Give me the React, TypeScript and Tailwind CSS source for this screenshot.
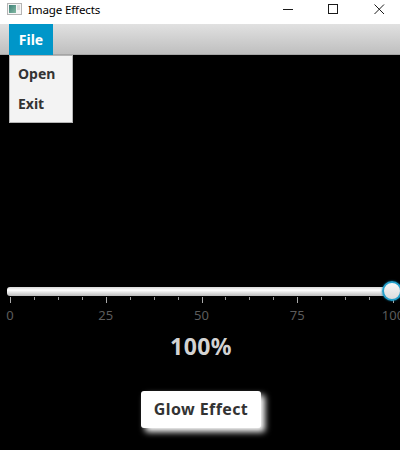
const ticks = Array.from({ length: 17 }, (_, i) => i);
const labels = [0, 25, 50, 75, 100];

function TitleBar() {
  return (
    <div className="flex h-6 items-start bg-white text-black">
      <svg className="mt-[3px] ml-[7px] shrink-0" width="15" height="12" viewBox="0 0 15 12">
        <defs>
          <linearGradient id="pane" x1="0" y1="0" x2="1" y2="1">
            <stop offset="0" stopColor="#3c8078" />
            <stop offset="1" stopColor="#83b9a2" />
          </linearGradient>
        </defs>
        <rect x=".5" y=".5" width="14" height="11" fill="#f6f6f6" stroke="#b4b4b4" />
        <rect x="2" y="2" width="7" height="8" fill="url(#pane)" />
        <rect x="10" y="2" width="3" height="5" fill="#dcdcdc" />
      </svg>
      <span className="mt-[2px] ml-[6px] flex-1 text-[11.6px] leading-4 tracking-[-0.16px] whitespace-nowrap">Image Effects</span>
      <svg className="shrink-0" width="118" height="20" viewBox="0 0 118 20" fill="none" stroke="#1a1a1a">
        <path d="M1 9.5H11" />
        <rect x="46.5" y="4.5" width="9" height="9" />
        <path d="M92.5 4.5L102 14M102 4.5L92.5 14" />
      </svg>
    </div>
  );
}

function MenuBar() {
  return (
    <div className="flex h-[31px] border-b border-[#a5a5a5] bg-linear-to-b from-[#e1e1e1] to-[#bfbfbf] pl-[9px]">
      <div className="relative h-[31px] w-11 bg-[#0096c9] text-center text-[14px] leading-8 font-bold text-white">
        File
        <div className="absolute top-[31px] left-0 flex h-[68px] w-16 flex-col border border-[#b5b5b5] bg-[#f3f3f3] pt-[5px] pl-2 text-left text-[14px] text-[#333]">
          <span className="h-[29px] leading-[26px]">Open</span>
          <span className="h-[29px] leading-[28px]">Exit</span>
        </div>
      </div>
    </div>
  );
}

function Slider() {
  return (
    <div className="flex flex-col">
      <div className="relative ml-[7px] h-[9px] rounded-l-[3px] bg-linear-to-b from-[#d8d8d8] via-white via-35% to-[#bcbcbc]">
        <div className="absolute -top-[6px] left-[375px] h-5 w-5 rounded-full border-2 border-[#25a0cb] bg-linear-to-b from-[#f7f7f7] to-[#dcdcdc] shadow-[0_0_2px_#087da8]" />
      </div>
      <div className="ml-[10px] flex h-[7px] w-96 justify-between pt-[1px]">
        {ticks.map((i) => (
          <i key={i} className={i % 4 === 0 ? "h-[6px] w-px bg-[#aaa]" : "h-[3px] w-px bg-[#999]"} />
        ))}
      </div>
      <div className="mt-[3px] ml-[10px] flex w-[383px] justify-between text-[13px] leading-[18px] text-[#5c5c5c]">
        {labels.map((n) => (
          <span key={n} className="flex w-0 justify-center">{n}</span>
        ))}
      </div>
    </div>
  );
}

export default function App() {
  return (
    <div className="flex h-[450px] w-[400px] flex-col overflow-hidden bg-black font-['Noto_Sans','Open_Sans',sans-serif]">
      <TitleBar />
      <MenuBar />
      <div className="flex flex-col pt-[232px]">
        <Slider />
        <div className="mt-[6px] pl-[2px] text-center text-[23px] leading-[32px] font-bold tracking-[0.4px] text-[#d2d2d2]">100%</div>
        <button className="mt-[29px] ml-[141px] h-[37px] w-[120px] rounded-[3px] bg-white pb-[2px] text-[16px] font-bold tracking-[0.4px] text-[#333] shadow-[4px_4px_6px_#fff]">
          Glow Effect
        </button>
      </div>
    </div>
  );
}
